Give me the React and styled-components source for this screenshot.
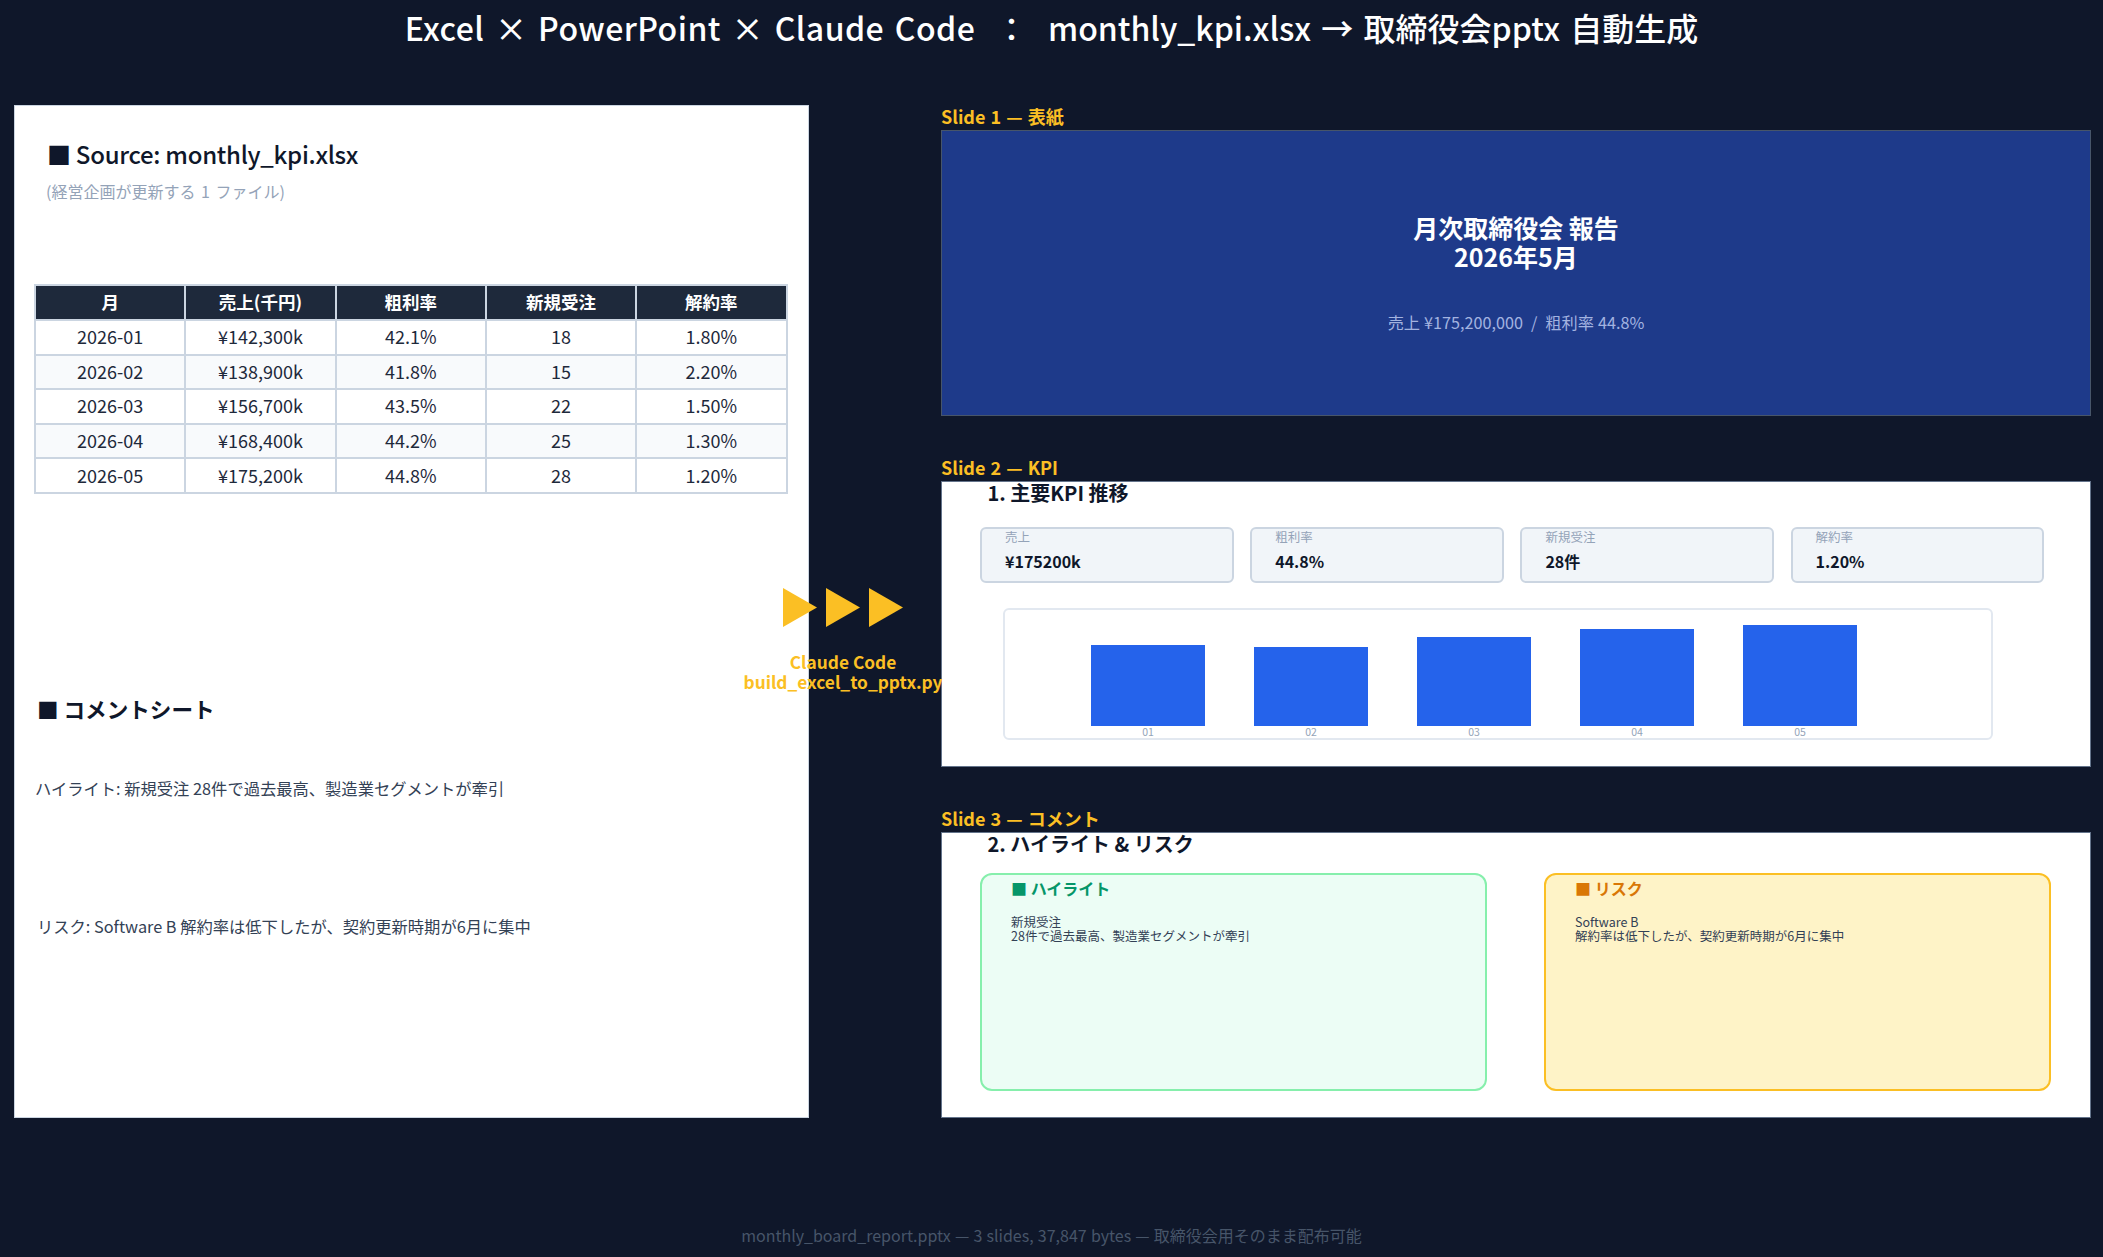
import React from "react";
import styled, { createGlobalStyle } from "styled-components";

const GlobalStyle = createGlobalStyle`
  html, body {
    margin: 0;
    padding: 0;
    background: #0f172a;
  }
  body {
    font-family: "Noto Sans CJK JP", "Noto Sans", sans-serif;
    color: #0f172a;
  }
  * {
    box-sizing: border-box;
  }
`;

const Page = styled.div`
  width: 2103px;
  height: 1257px;
  background: #0f172a;
  overflow: hidden;
`;
const Title = styled.h1`
  margin: 0;
  height: 105px;
  padding-top: 4px;
  font-size: 32px;
  line-height: 46px;
  font-weight: 500;
  word-spacing: 3px;
  color: #ffffff;
  text-align: center;
  white-space: pre;
`;
const TitleLead = styled.span`
  letter-spacing: 0.45px;
`;
const Main = styled.div`
  position: relative;
  display: flex;
  justify-content: space-between;
  padding: 0 12px 0 14px;
`;

// left panel
const SourcePanel = styled.section`
  width: 795px;
  height: 1013px;
  background: #ffffff;
  border: 1.5px solid #cbd5e1;
`;
const SourceHeading = styled.h2`
  margin: 33px 0 0 32px;
  font-size: 24px;
  line-height: 30px;
  font-weight: 500;
  letter-spacing: -0.28px;
`;
const SourceNote = styled.p`
  margin: 11px 0 0 31px;
  font-size: 16px;
  line-height: 22px;
  word-spacing: 2px;
  color: #94a3b8;
`;
const Table = styled.table`
  width: 753.5px;
  margin: 82px 0 0 19px;
  border-collapse: collapse;
  table-layout: fixed;
  font-size: 18px;
  color: #1e293b;
`;
const Th = styled.th`
  height: 35px;
  padding: 0 0 2px;
  background: #1e293b;
  border: 2px solid #cbd5e1;
  color: #ffffff;
  font-weight: 700;
  font-size: 17.5px;
`;
const Td = styled.td`
  height: 34.6px;
  padding: 0 0 2px;
  border: 2px solid #cbd5e1;
  text-align: center;
  background: ${(p) => (p.$alt ? "#f8fafc" : "#ffffff")};
`;
const CommentHeading = styled.h2`
  margin: 200px 0 0 22px;
  font-size: 21.6px;
  line-height: 30px;
  font-weight: 700;
`;
const CommentLine = styled.p`
  margin: ${(p) => p.$top}px 0 0 ${(p) => p.$left}px;
  font-size: 16.3px;
  line-height: 24px;
  color: #334155;
`;

// arrow overlay between the panels
const Flow = styled.div`
  position: absolute;
  top: 483px;
  left: 643px;
  width: 400px;
  display: flex;
  flex-direction: column;
  align-items: center;
  z-index: 2;
`;
const Arrows = styled.div`
  display: flex;
  gap: 9px;
`;
const FlowLabel = styled.div`
  margin-top: 25px;
  font-size: 17.3px;
  line-height: 20px;
  font-weight: 700;
  color: #fbbf24;
  text-align: center;
`;

// slides
const SlideColumn = styled.div`
  width: 1150px;
  display: flex;
  flex-direction: column;
  gap: 40px;
`;
const SlideLabel = styled.div`
  height: 25px;
  font-size: 18px;
  line-height: 22px;
  font-weight: 700;
  word-spacing: 1px;
  color: #fbbf24;
`;
const Slide = styled.div`
  height: 286px;
  border: 1.5px solid #64748b;
  background: #ffffff;
`;
const CoverSlide = styled(Slide)`
  background: #1e3a8a;
  border-color: #475569;
  display: flex;
  flex-direction: column;
  align-items: center;
  padding-top: 82px;
`;
const CoverTitle = styled.div`
  font-size: 25px;
  line-height: 29px;
  font-weight: 700;
  color: #ffffff;
  text-align: center;
`;
const CoverSub = styled.div`
  margin-top: 39px;
  font-size: 16.2px;
  line-height: 24px;
  word-spacing: 0.4px;
  color: #a3b3e0;
  white-space: pre;
`;
const SlideTitle = styled.div`
  margin-left: 45.5px;
  font-size: 20px;
  line-height: 22px;
  font-weight: 700;
`;
const KpiRow = styled.div`
  display: flex;
  gap: 16.7px;
  margin: 23px 0 0 38px;
`;
const KpiCard = styled.div`
  width: 253.5px;
  height: 56px;
  padding-left: 23px;
  background: #f1f5f9;
  border: 2px solid #cbd5e1;
  border-radius: 6px;
`;
const KpiName = styled.div`
  font-size: 12.5px;
  line-height: 15px;
  color: #94a3b8;
`;
const KpiValue = styled.div`
  margin-top: 7px;
  font-size: 16px;
  line-height: 20px;
  font-weight: 700;
`;
const Chart = styled.div`
  width: 990px;
  height: 132px;
  margin: 25px 0 0 61px;
  padding-left: 86px;
  display: flex;
  align-items: flex-end;
  gap: 49px;
  background: #ffffff;
  border: 2px solid #e2e8f0;
  border-radius: 6px;
`;
const BarCol = styled.div`
  width: 114px;
  display: flex;
  flex-direction: column;
  align-items: center;
`;
const Bar = styled.div`
  width: 100%;
  background: #2563eb;
`;
const BarLabel = styled.div`
  height: 12px;
  font-size: 10.5px;
  line-height: 12px;
  color: #94a3b8;
`;
const NoteRow = styled.div`
  display: flex;
  gap: 57px;
  margin: 18px 0 0 38px;
`;
const NoteBox = styled.div`
  width: 507px;
  height: 218px;
  padding: 1px 0 0 29px;
  background: ${(p) => p.$bg};
  border: 2px solid ${(p) => p.$line};
  border-radius: 12px;
`;
const NoteHeading = styled.div`
  font-size: 16px;
  line-height: 24px;
  font-weight: 700;
  color: ${(p) => p.$color};
`;
const NoteBody = styled.div`
  margin-top: 15px;
  font-size: 12.5px;
  line-height: 14px;
  color: #334155;
`;
const Footer = styled.footer`
  margin-top: 105px;
  font-size: 16px;
  line-height: 24px;
  word-spacing: 0.6px;
  color: #475569;
  text-align: center;
`;

const months = [
  ["2026-01", "¥142,300k", "42.1%", "18", "1.80%"],
  ["2026-02", "¥138,900k", "41.8%", "15", "2.20%"],
  ["2026-03", "¥156,700k", "43.5%", "22", "1.50%"],
  ["2026-04", "¥168,400k", "44.2%", "25", "1.30%"],
  ["2026-05", "¥175,200k", "44.8%", "28", "1.20%"],
];
const kpis = [
  ["売上", "¥175200k"],
  ["粗利率", "44.8%"],
  ["新規受注", "28件"],
  ["解約率", "1.20%"],
];
const bars = [
  ["01", 81],
  ["02", 79],
  ["03", 89],
  ["04", 97],
  ["05", 101],
];

const Arrow = () => (
  <svg width="34" height="39" viewBox="0 0 34 39">
    <polygon points="0,0 34,19.5 0,39" fill="#fbbf24" />
  </svg>
);

export default function App() {
  return (
    <Page>
      <GlobalStyle />
      <Title>
        <TitleLead>Excel × PowerPoint × Claude Code</TitleLead>
        {"  ：  monthly_kpi.xlsx → 取締役会pptx 自動生成"}
      </Title>
      <Main>
        <SourcePanel>
          <SourceHeading>■ Source: monthly_kpi.xlsx</SourceHeading>
          <SourceNote>(経営企画が更新する 1 ファイル)</SourceNote>
          <Table>
            <thead>
              <tr>
                {["月", "売上(千円)", "粗利率", "新規受注", "解約率"].map((h) => (
                  <Th key={h}>{h}</Th>
                ))}
              </tr>
            </thead>
            <tbody>
              {months.map((row, i) => (
                <tr key={row[0]}>
                  {row.map((v, j) => (
                    <Td key={j} $alt={i % 2 === 1}>{v}</Td>
                  ))}
                </tr>
              ))}
            </tbody>
          </Table>
          <CommentHeading>■ コメントシート</CommentHeading>
          <CommentLine $top={52} $left={20}>ハイライト: 新規受注 28件で過去最高、製造業セグメントが牽引</CommentLine>
          <CommentLine $top={114} $left={22}>リスク: Software B 解約率は低下したが、契約更新時期が6月に集中</CommentLine>
        </SourcePanel>

        <Flow>
          <Arrows>
            <Arrow />
            <Arrow />
            <Arrow />
          </Arrows>
          <FlowLabel>
            Claude Code
            <br />
            build_excel_to_pptx.py
          </FlowLabel>
        </Flow>

        <SlideColumn>
          <div>
            <SlideLabel>Slide 1 — 表紙</SlideLabel>
            <CoverSlide>
              <CoverTitle>
                月次取締役会 報告
                <br />
                2026年5月
              </CoverTitle>
              <CoverSub>{"売上 ¥175,200,000  /  粗利率 44.8%"}</CoverSub>
            </CoverSlide>
          </div>
          <div>
            <SlideLabel>Slide 2 — KPI</SlideLabel>
            <Slide>
              <SlideTitle>1. 主要KPI 推移</SlideTitle>
              <KpiRow>
                {kpis.map(([name, value]) => (
                  <KpiCard key={name}>
                    <KpiName>{name}</KpiName>
                    <KpiValue>{value}</KpiValue>
                  </KpiCard>
                ))}
              </KpiRow>
              <Chart>
                {bars.map(([label, h]) => (
                  <BarCol key={label}>
                    <Bar style={{ height: h }} />
                    <BarLabel>{label}</BarLabel>
                  </BarCol>
                ))}
              </Chart>
            </Slide>
          </div>
          <div>
            <SlideLabel>Slide 3 — コメント</SlideLabel>
            <Slide>
              <SlideTitle>2. ハイライト &amp; リスク</SlideTitle>
              <NoteRow>
                <NoteBox $bg="#ecfdf5" $line="#86efac">
                  <NoteHeading $color="#059669">■ ハイライト</NoteHeading>
                  <NoteBody>
                    新規受注
                    <br />
                    28件で過去最高、製造業セグメントが牽引
                  </NoteBody>
                </NoteBox>
                <NoteBox $bg="#fef3c7" $line="#fbbf24">
                  <NoteHeading $color="#d97706">■ リスク</NoteHeading>
                  <NoteBody>
                    Software B
                    <br />
                    解約率は低下したが、契約更新時期が6月に集中
                  </NoteBody>
                </NoteBox>
              </NoteRow>
            </Slide>
          </div>
        </SlideColumn>
      </Main>
      <Footer>monthly_board_report.pptx — 3 slides, 37,847 bytes — 取締役会用そのまま配布可能</Footer>
    </Page>
  );
}
